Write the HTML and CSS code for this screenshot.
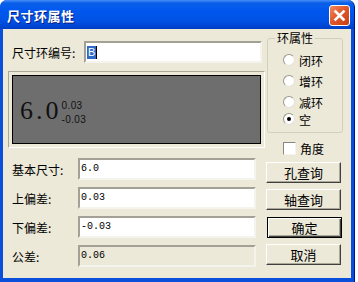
FILE: index.html
```html
<!DOCTYPE html>
<html lang="zh">
<head>
  <meta charset="UTF-8">
  <title>尺寸环属性</title>
  <link rel="stylesheet" href="styles.css">
</head>
<body>
  <div class="window">
    <div class="titlebar">
      <span class="title">尺寸环属性</span>
      <div class="close">
        <svg width="13" height="13" viewBox="0 0 13 13">
          <path d="M2.5 2.5 L10.5 10.5 M10.5 2.5 L2.5 10.5" stroke="#fff" stroke-width="2.6" stroke-linecap="square"/>
        </svg>
      </div>
    </div>

    <div class="client">
      <div class="left">
        <div class="row id-row">
          <span class="label">尺寸环编号:</span>
          <div class="textbox"><span class="sel">B</span><span class="caret"></span></div>
        </div>

        <div class="preview">
          <div class="screen">
            <span class="big">6.0</span>
            <span class="tol">
              <span class="up">0.03</span>
              <span class="down">-0.03</span>
            </span>
          </div>
        </div>

        <div class="fields">
          <div class="row">
            <span class="label">基本尺寸:</span>
            <div class="textbox">6.0</div>
          </div>
          <div class="row">
            <span class="label">上偏差:</span>
            <div class="textbox">0.03</div>
          </div>
          <div class="row">
            <span class="label">下偏差:</span>
            <div class="textbox">-0.03</div>
          </div>
          <div class="row">
            <span class="label">公差:</span>
            <div class="textbox disabled">0.06</div>
          </div>
        </div>
      </div>

      <div class="right">
        <fieldset class="group">
          <legend>环属性</legend>
          <div class="radio"><span class="dot"></span>闭环</div>
          <div class="radio"><span class="dot"></span>增环</div>
          <div class="radio"><span class="dot"></span>减环</div>
          <div class="radio checked"><span class="dot"></span>空</div>
        </fieldset>

        <div class="check"><span class="box"></span>角度</div>

        <div class="buttons">
          <div class="btn">孔查询</div>
          <div class="btn">轴查询</div>
          <div class="btn default">确定</div>
          <div class="btn">取消</div>
        </div>
      </div>
    </div>
  </div>
</body>
</html>
```

FILE: styles.css
```css
body {
  margin: 0;
  background: #fff;
  font-family: "Noto Sans CJK SC", "Liberation Sans", sans-serif;
  font-size: 12px;
  color: #000;
}
.window {
  width: 355px;
  height: 282px;
  box-sizing: border-box;
  border-radius: 7px 7px 0 0;
  background: #0a4fdc;
  padding: 0 3px 4px 3px;
  display: flex;
  flex-direction: column;
  border-right: 1px solid #00138c;
}
.titlebar {
  height: 29px;
  margin: 0 -3px;
  border-radius: 7px 7px 0 0;
  background: linear-gradient(#4790f8 0, #0a5fe8 3px, #0058ee 35%, #0052e6 70%, #0046d4 90%, #003ec4 100%);
  display: flex;
  align-items: center;
  justify-content: space-between;
  padding: 0 4px 0 7px;
}
.title {
  color: #fff;
  font-weight: bold;
  font-size: 13px;
  letter-spacing: 0.5px;
  text-shadow: 1px 1px 0 #0a1f7a;
  margin-top: 1px;
}
.close {
  width: 19px;
  height: 19px;
  border: 1px solid #fff;
  border-radius: 3px;
  background: linear-gradient(135deg, #f08a5d 0, #e2582d 45%, #c73f15 100%);
  display: flex;
  align-items: center;
  justify-content: center;
  margin-top: 1px;
}
.client {
  flex: 1;
  background: #ece9d8;
  display: flex;
  gap: 2px;
  padding-left: 5px;
}
.left {
  width: 257px;
}
.row {
  display: flex;
  align-items: center;
  height: 22px;
}
.label {
  padding-left: 4px;
  width: 66px;
  white-space: nowrap;
}
.id-row {
  margin-top: 12px;
}
.id-row .label {
  width: 72px;
}
.textbox {
  width: 178px;
  height: 22px;
  box-sizing: border-box;
  background: #fff;
  border: 2px solid;
  border-color: #a3a196 #f4f3ee #f4f3ee #a3a196;
  font-family: "Liberation Mono", monospace;
  font-size: 10px;
  line-height: 16px;
  padding-left: 1px;
  display: flex;
  align-items: center;
}
.textbox.disabled {
  background: #ece9d8;
}
.sel {
  background: #316ac5;
  color: #fff;
  font-family: "Liberation Sans", sans-serif;
  font-size: 11px;
  line-height: 13px;
  padding: 0 1px;
}
.caret {
  width: 1px;
  height: 13px;
  background: #000;
}
.preview {
  margin-top: 8px;
  height: 77px;
  box-sizing: border-box;
  border: 1px solid;
  border-color: #aca899 #fff #fff #aca899;
  padding: 3px;
}
.screen {
  height: 100%;
  box-sizing: border-box;
  border: 1px solid #000;
  background: #6e6e6e;
  display: flex;
  align-items: flex-start;
  padding: 20px 0 0 7px;
}
.big {
  font-family: "Liberation Serif", serif;
  font-size: 26px;
  line-height: 30px;
  letter-spacing: 3px;
  color: #111;
}
.tol {
  display: flex;
  flex-direction: column;
  font-family: "Liberation Sans", sans-serif;
  font-size: 10px;
  letter-spacing: 0.4px;
  color: #111;
  margin-top: 4px;
}
.up {
  line-height: 12px;
}
.down {
  line-height: 16px;
}
.fields {
  margin-top: 10px;
  display: flex;
  flex-direction: column;
  gap: 7px;
}
.right {
  width: 76px;
}
.group {
  margin: 2px 0 0 0;
  padding: 7px 0 5px 0;
  border: 1px solid #d0d0bf;
  border-radius: 3px;
}
.group legend {
  padding: 0 2px;
  margin-left: 7px;
  line-height: 14px;
}
.radio {
  display: flex;
  align-items: center;
  gap: 4px;
  height: 16px;
  margin-left: 15px;
}
.radio + .radio {
  margin-top: 5px;
}
.radio:last-child {
  margin-top: 1px;
}
.dot {
  width: 12px;
  height: 12px;
  box-sizing: border-box;
  border-radius: 50%;
  border: 1px solid;
  border-color: #9a988c #e4e2d8 #e4e2d8 #9a988c;
  background: #fff;
  display: flex;
  align-items: center;
  justify-content: center;
}
.checked .dot::after {
  content: "";
  width: 4px;
  height: 4px;
  border-radius: 50%;
  background: #000;
}
.check {
  display: flex;
  align-items: center;
  gap: 4px;
  margin: 9px 0 0 16px;
  height: 13px;
}
.box {
  width: 13px;
  height: 13px;
  box-sizing: border-box;
  background: #fff;
  border: 1px solid;
  border-color: #8a887e #f4f3ee #f4f3ee #8a887e;
}
.buttons {
  margin-top: 7px;
  display: flex;
  flex-direction: column;
  gap: 6px;
  margin-left: -1px;
}
.btn {
  width: 75px;
  height: 21px;
  box-sizing: border-box;
  display: flex;
  align-items: center;
  justify-content: center;
  background: #ece9d8;
  border: 1px solid;
  border-color: #fff #404040 #404040 #fff;
  box-shadow: inset -1px -1px 0 #aca899;
  font-size: 13px;
}
.btn.default {
  margin-top: 1px;
  margin-left: 1px;
  border: 1px solid #000;
  box-shadow: inset 1px 1px 0 #fff, inset -1px -1px 0 #404040, inset -2px -2px 0 #aca899;
}
```
